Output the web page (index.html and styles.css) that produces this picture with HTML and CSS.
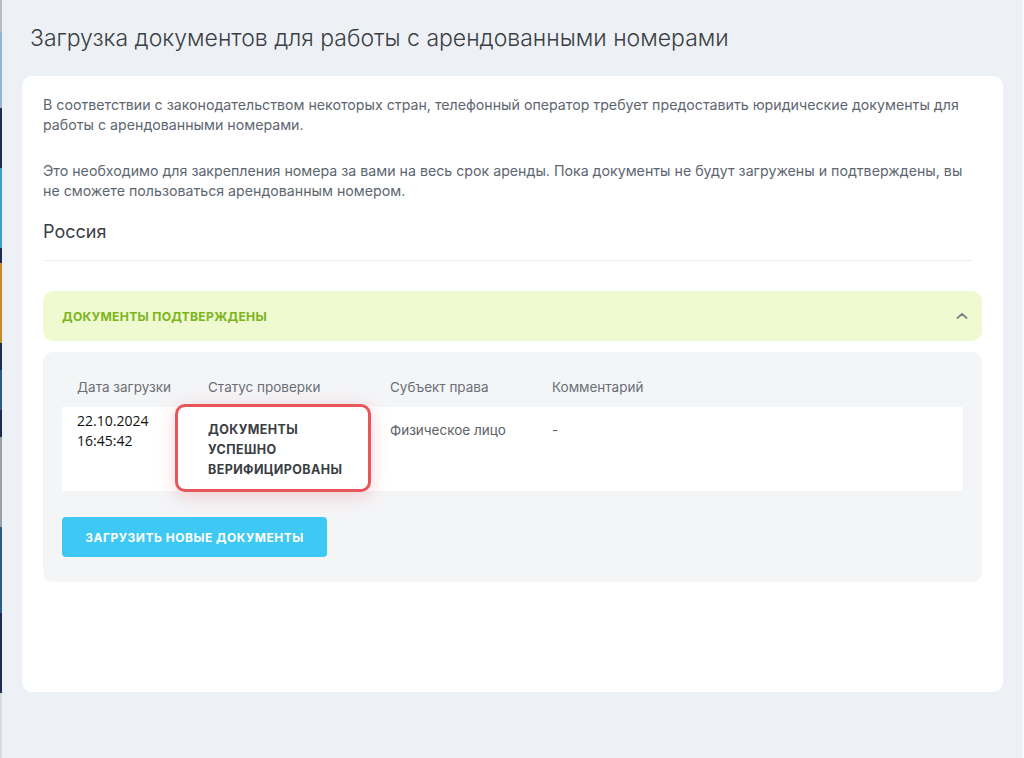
FILE: index.html
```html
<!DOCTYPE html>
<html lang="ru">
<head>
<meta charset="utf-8">
<title>Загрузка документов</title>
<link rel="stylesheet" href="styles.css">
</head>
<body>
<div class="screen">
  <div class="edge-left">
    <span class="seg s-gray"></span>
    <span class="seg s-light"></span>
    <span class="seg s-navy h60"></span>
    <span class="seg s-cyan h80"></span>
    <span class="seg s-navy h15"></span>
    <span class="seg s-gold h80"></span>
    <span class="seg s-navy h27"></span>
    <span class="seg s-blue h40"></span>
    <span class="seg s-navy h27"></span>
    <span class="seg s-gray2 h90"></span>
    <span class="seg s-blue h86"></span>
    <span class="seg s-navy h80"></span>
    <span class="seg s-rest"></span>
  </div>
  <main class="page">
    <h1 class="page-title">Загрузка документов для работы с арендованными номерами</h1>
    <section class="card">
      <p class="note">В соответствии с законодательством некоторых стран, телефонный оператор требует предоставить юридические документы для работы с арендованными номерами.</p>
      <p class="note">Это необходимо для закрепления номера за вами на весь срок аренды. Пока документы не будут загружены и подтверждены, вы не сможете пользоваться арендованным номером.</p>
      <h2 class="country">Россия</h2>
      <div class="accordion-head">
        <span class="accordion-title">ДОКУМЕНТЫ ПОДТВЕРЖДЕНЫ</span>
        <svg class="chevron" width="14" height="10" viewBox="0 0 14 10"><path d="M2.5 7 L7 2.8 L11.5 7" fill="none" stroke="#7b8088" stroke-width="1.8" stroke-linecap="round" stroke-linejoin="round"/></svg>
      </div>
      <div class="panel">
        <div class="table">
          <div class="row head">
            <div class="cell">Дата загрузки</div>
            <div class="cell">Статус проверки</div>
            <div class="cell">Субъект права</div>
            <div class="cell">Комментарий</div>
          </div>
          <div class="row body">
            <div class="cell date">22.10.2024<br>16:45:42</div>
            <div class="cell status">ДОКУМЕНТЫ<br>УСПЕШНО<br>ВЕРИФИЦИРОВАНЫ<span class="highlight"></span></div>
            <div class="cell">Физическое лицо</div>
            <div class="cell">-</div>
          </div>
        </div>
        <button class="btn-upload">ЗАГРУЗИТЬ НОВЫЕ ДОКУМЕНТЫ</button>
      </div>
    </section>
  </main>
  <div class="edge-right"></div>
</div>
</body>
</html>
```

FILE: styles.css
```css
* { box-sizing: border-box; }
html, body { margin: 0; padding: 0; }
body {
  background: #edf1f5;
  font-family: "Inter", "Noto Sans", sans-serif;
  color: #333;
}
.screen {
  display: flex;
  width: 1024px;
  height: 758px;
  overflow: hidden;
}
.edge-left {
  width: 2px;
  display: flex;
  flex-direction: column;
  flex: none;
}
.seg { display: block; width: 2px; }
.s-gray { height: 32px; background: #b9bcc0; }
.s-light { height: 76px; background: #8fb6cf; }
.s-navy { background: #1b2d52; }
.s-cyan { background: #3f9fd0; }
.s-gold { background: #c58b24; }
.s-blue { background: #2a5a93; }
.s-gray2 { background: #9aa0a8; }
.s-rest { flex: 1; background: #d9dde2; }
.h15 { height: 15px; }
.h27 { height: 27px; }
.h40 { height: 40px; }
.h60 { height: 60px; }
.h80 { height: 80px; }
.h86 { height: 86px; }
.h90 { height: 90px; }
.edge-right {
  width: 2px;
  flex: none;
  background: #f7f9fb;
}
.page {
  flex: 1;
  padding: 23px 0 0 20px;
}
.page-title {
  margin: 0 0 22px 8px;
  font-size: 23px;
  line-height: 31px;
  font-weight: 300;
  color: #3b3f44;
  letter-spacing: 0;
}
.card {
  width: 981px;
  background: #fff;
  border-radius: 10px;
  padding: 19px 21px 110px 21px;
}
.note {
  margin: 0 0 26px 0;
  font-size: 14.2px;
  line-height: 20px;
  color: #5d6670;
  padding-right: 10px;
}
.note + .note { margin-bottom: 19px; }
.country {
  margin: 0;
  font-size: 18px;
  line-height: 24px;
  font-weight: 400;
  color: #3a3d42;
  padding-bottom: 16px;
  border-bottom: 1px solid #e9ebee;
  width: 929px;
}
.accordion-head {
  margin-top: 30px;
  height: 50px;
  background: #effad0;
  border-radius: 10px;
  display: flex;
  align-items: center;
  justify-content: space-between;
  padding: 0 13px 0 19px;
}
.accordion-title {
  font-size: 12.2px;
  font-weight: 700;
  color: #7db41c;
  letter-spacing: 0.3px;
}
.panel {
  margin-top: 11px;
  background: #f4f5f7;
  border-radius: 10px;
  padding: 25px 19px 25px 19px;
}
.row {
  display: grid;
  grid-template-columns: 131px 182px 162px 1fr;
}
.row.head { margin-bottom: 10px; }
.row.head .cell {
  font-size: 13.5px;
  line-height: 20px;
  color: #6a6f75;
}
.row.body {
  background: #fff;
  height: 84px;
}
.cell { padding-left: 15px; }
.row.body .cell {
  padding-top: 13px;
  font-size: 13.5px;
  line-height: 20px;
  color: #5c6168;
}
.row.body .cell.date {
  padding-top: 4px;
  font-family: "Open Sans", "Noto Sans", sans-serif;
  font-size: 14px;
  color: #111;
}
.row.body .cell.status {
  position: relative;
  font-size: 12.5px;
  font-weight: 700;
  color: #3a3d42;
  letter-spacing: 0.4px;
}
.highlight {
  position: absolute;
  left: -18px;
  top: -3px;
  right: 4px;
  bottom: -1px;
  border: 3px solid #e8555a;
  border-radius: 10px;
  box-shadow: 0 4px 18px rgba(232, 85, 90, 0.25);
}
.btn-upload {
  margin-top: 26px;
  width: 265px;
  height: 40px;
  border: none;
  border-radius: 4px;
  background: #3ec8f4;
  color: #fff;
  font-family: "Inter", "Noto Sans", sans-serif;
  font-size: 12px;
  font-weight: 700;
  letter-spacing: 0.5px;
}
```
